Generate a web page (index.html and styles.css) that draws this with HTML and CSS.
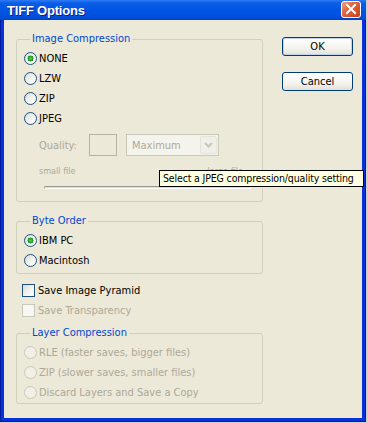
FILE: index.html
```html
<!DOCTYPE html>
<html>
<head>
<meta charset="utf-8">
<title>TIFF Options</title>
<link rel="stylesheet" href="styles.css">
</head>
<body>
<div class="window">
  <div class="titlebar">
    <span class="title">TIFF Options</span>
    <span class="close">
      <svg width="12" height="12" viewBox="0 0 12 12"><path d="M2 2 L10 10 M10 2 L2 10" stroke="#fff" stroke-width="2" stroke-linecap="square"/></svg>
    </span>
  </div>
  <div class="frame">
    <div class="content">
      <div class="left">
        <fieldset class="group g1">
          <legend>Image Compression</legend>
          <div class="row"><span class="radio checked"></span><span class="lbl">NONE</span></div>
          <div class="row"><span class="radio"></span><span class="lbl">LZW</span></div>
          <div class="row"><span class="radio"></span><span class="lbl">ZIP</span></div>
          <div class="row"><span class="radio"></span><span class="lbl">JPEG</span></div>
          <div class="quality">
            <span class="qlabel dis">Quality:</span>
            <span class="qbox"></span>
            <span class="select"><span class="seltext dis">Maximum</span><span class="arrow"><svg width="9" height="6" viewBox="0 0 9 6"><path d="M1 1 L4.5 4.5 L8 1" fill="none" stroke="#C9C7BA" stroke-width="2"/></svg></span></span>
          </div>
          <div class="scale dis"><span>small file</span><span>large file</span></div>
          <div class="track"></div>
        </fieldset>
        <fieldset class="group g2">
          <legend>Byte Order</legend>
          <div class="row"><span class="radio checked"></span><span class="lbl">IBM PC</span></div>
          <div class="row"><span class="radio"></span><span class="lbl">Macintosh</span></div>
        </fieldset>
        <div class="check first"><span class="box"></span><span class="lbl">Save Image Pyramid</span></div>
        <div class="check disabled"><span class="box"></span><span class="lbl">Save Transparency</span></div>
        <fieldset class="group g3">
          <legend>Layer Compression</legend>
          <div class="row disabled"><span class="radio"></span><span class="lbl">RLE (faster saves, bigger files)</span></div>
          <div class="row disabled"><span class="radio"></span><span class="lbl">ZIP (slower saves, smaller files)</span></div>
          <div class="row disabled"><span class="radio"></span><span class="lbl">Discard Layers and Save a Copy</span></div>
        </fieldset>
      </div>
      <div class="right">
        <button class="btn default">OK</button>
        <button class="btn">Cancel</button>
      </div>
    </div>
  </div>
  <div class="tooltip">Select a JPEG compression/quality setting</div>
</div>
</body>
</html>
```
FILE: styles.css
```css
html, body {
  margin: 0;
  padding: 0;
  background: #D4D0C8;
}
body {
  font-family: "DejaVu Sans Condensed", "DejaVu Sans", sans-serif;
  font-size: 11px;
  color: #000;
}
.window {
  position: relative;
  width: 366px;
  height: 422px;
  display: flex;
  flex-direction: column;
}
.titlebar {
  height: 20px;
  flex: none;
  display: flex;
  align-items: center;
  justify-content: space-between;
  padding: 0 5px 0 7px;
  background: linear-gradient(#2E7BF5 0, #0A5EE8 3px, #0055E3 50%, #004FDC 85%, #0043C4 100%);
  box-sizing: border-box;
}
.title {
  font-family: "Liberation Sans", sans-serif;
  font-weight: bold;
  font-size: 13px;
  color: #fff;
  text-shadow: 1px 1px 0 #0A1E8C;
  letter-spacing: -0.2px;
}
.close {
  width: 20px;
  height: 17px;
  box-sizing: border-box;
  border: 1px solid #fff;
  border-radius: 3px;
  background: linear-gradient(135deg, #F0A080 0, #E0653F 40%, #C9401B 100%);
  display: flex;
  align-items: center;
  justify-content: center;
  margin-top: -2px;
}
.frame {
  flex: 1;
  display: flex;
  background: #0831D9;
  border-left: 1px solid #001EA0;
  border-right: 1px solid #001EA0;
  border-bottom: 1px solid #001EA0;
  padding: 0 3px 3px 3px;
}
.content {
  flex: 1;
  display: flex;
  background: #ECE9D8;
}
.left {
  padding: 12px 0 0 12px;
  width: 247px;
}
.right {
  display: flex;
  flex-direction: column;
  padding: 17px 0 0 19px;
  gap: 16px;
}
.group {
  margin: 0;
  width: 247px;
  box-sizing: border-box;
  border: 1px solid #D0D0BF;
  border-radius: 3px;
  padding: 2px 0 3px 7px;
}
.group legend {
  margin-left: 6px;
  padding: 0 2px;
  color: #0046D5;
  line-height: 14px;
}
.g1 { padding-bottom: 3px; }
.g2 { margin-top: 12px; padding-bottom: 3px; }
.g3 { margin-top: 6px; padding-bottom: 1px; }
.row {
  height: 20px;
  display: flex;
  align-items: center;
}
.radio {
  width: 13px;
  height: 13px;
  box-sizing: border-box;
  border-radius: 50%;
  border: 1px solid #1C5180;
  background: linear-gradient(135deg, #DCDCD7 0, #F5F5F2 60%, #fff 100%);
  flex: none;
}
.radio.checked {
  background: radial-gradient(circle at 50% 50%, #55D455 0, #21A121 2.2px, #1E8F1E 2.8px, transparent 3.2px),
              linear-gradient(135deg, #DCDCD7 0, #F5F5F2 60%, #fff 100%);
}
.lbl { margin-left: 2px; white-space: nowrap; }
.disabled .radio {
  border-color: #CAC8BB;
  background: #F1EFE6;
}
.disabled .lbl, .dis { color: #ACA899; }
.quality {
  display: flex;
  align-items: center;
  margin-top: 6px;
  height: 22px;
  padding-left: 15px;
}
.qlabel { width: 50px; }
.qbox {
  width: 28px;
  height: 22px;
  box-sizing: border-box;
  border: 1px solid #B5B3A6;
  background: #ECE9D8;
}
.select {
  margin-left: 9px;
  width: 93px;
  height: 22px;
  box-sizing: border-box;
  border: 1px solid #C9C7BA;
  background: #F5F4EC;
  display: flex;
  align-items: center;
  justify-content: space-between;
  padding: 0 1px 0 5px;
}
.arrow {
  width: 17px;
  height: 18px;
  box-sizing: border-box;
  border: 1px solid #E5E3D8;
  background: #F0EFE8;
  border-radius: 2px;
  display: flex;
  align-items: center;
  justify-content: center;
}
.scale {
  margin: 8px 0 0 15px;
  width: 204px;
  height: 14px;
  line-height: 14px;
  font-size: 9px;
  display: flex;
  justify-content: space-between;
}
.track {
  margin: 8px 0 9px 20px;
  width: 207px;
  height: 3px;
  box-sizing: border-box;
  border-top: 1px solid #9D9A8C;
  border-left: 1px solid #9D9A8C;
  border-bottom: 1px solid #fff;
  border-right: 1px solid #fff;
  border-radius: 2px;
  background: #DEDBC8;
}
.check {
  height: 20px;
  display: flex;
  align-items: center;
  padding-left: 6px;
}
.check.first { margin-top: 6px; }
.check .box {
  width: 13px;
  height: 13px;
  box-sizing: border-box;
  border: 1px solid #1C5180;
  background: linear-gradient(135deg, #DCDCD7 0, #F5F5F2 60%, #fff 100%);
  flex: none;
}
.check .lbl { margin-left: 3px; }
.check.disabled .box {
  border-color: #CAC8BB;
  background: #F7F6F1;
}
.btn {
  width: 71px;
  height: 19px;
  box-sizing: border-box;
  border: 1px solid #003C74;
  border-radius: 3px;
  background: linear-gradient(#FFFFFF 0, #F4F3EE 60%, #E3E1D6 100%);
  font-family: "DejaVu Sans Condensed", "DejaVu Sans", sans-serif;
  font-size: 11px;
  color: #000;
  padding: 0;
}
.btn.default {
  box-shadow: inset 0 0 0 1px #C0D3F5;
}
.tooltip {
  position: absolute;
  left: 159px;
  top: 170px;
  width: 205px;
  height: 17px;
  box-sizing: border-box;
  border: 1px solid #000;
  background: #FFFFE1;
  padding: 0 0 0 3px;
  line-height: 15px;
  font-size: 10.5px;
  letter-spacing: -0.15px;
  white-space: nowrap;
  overflow: hidden;
}
```
